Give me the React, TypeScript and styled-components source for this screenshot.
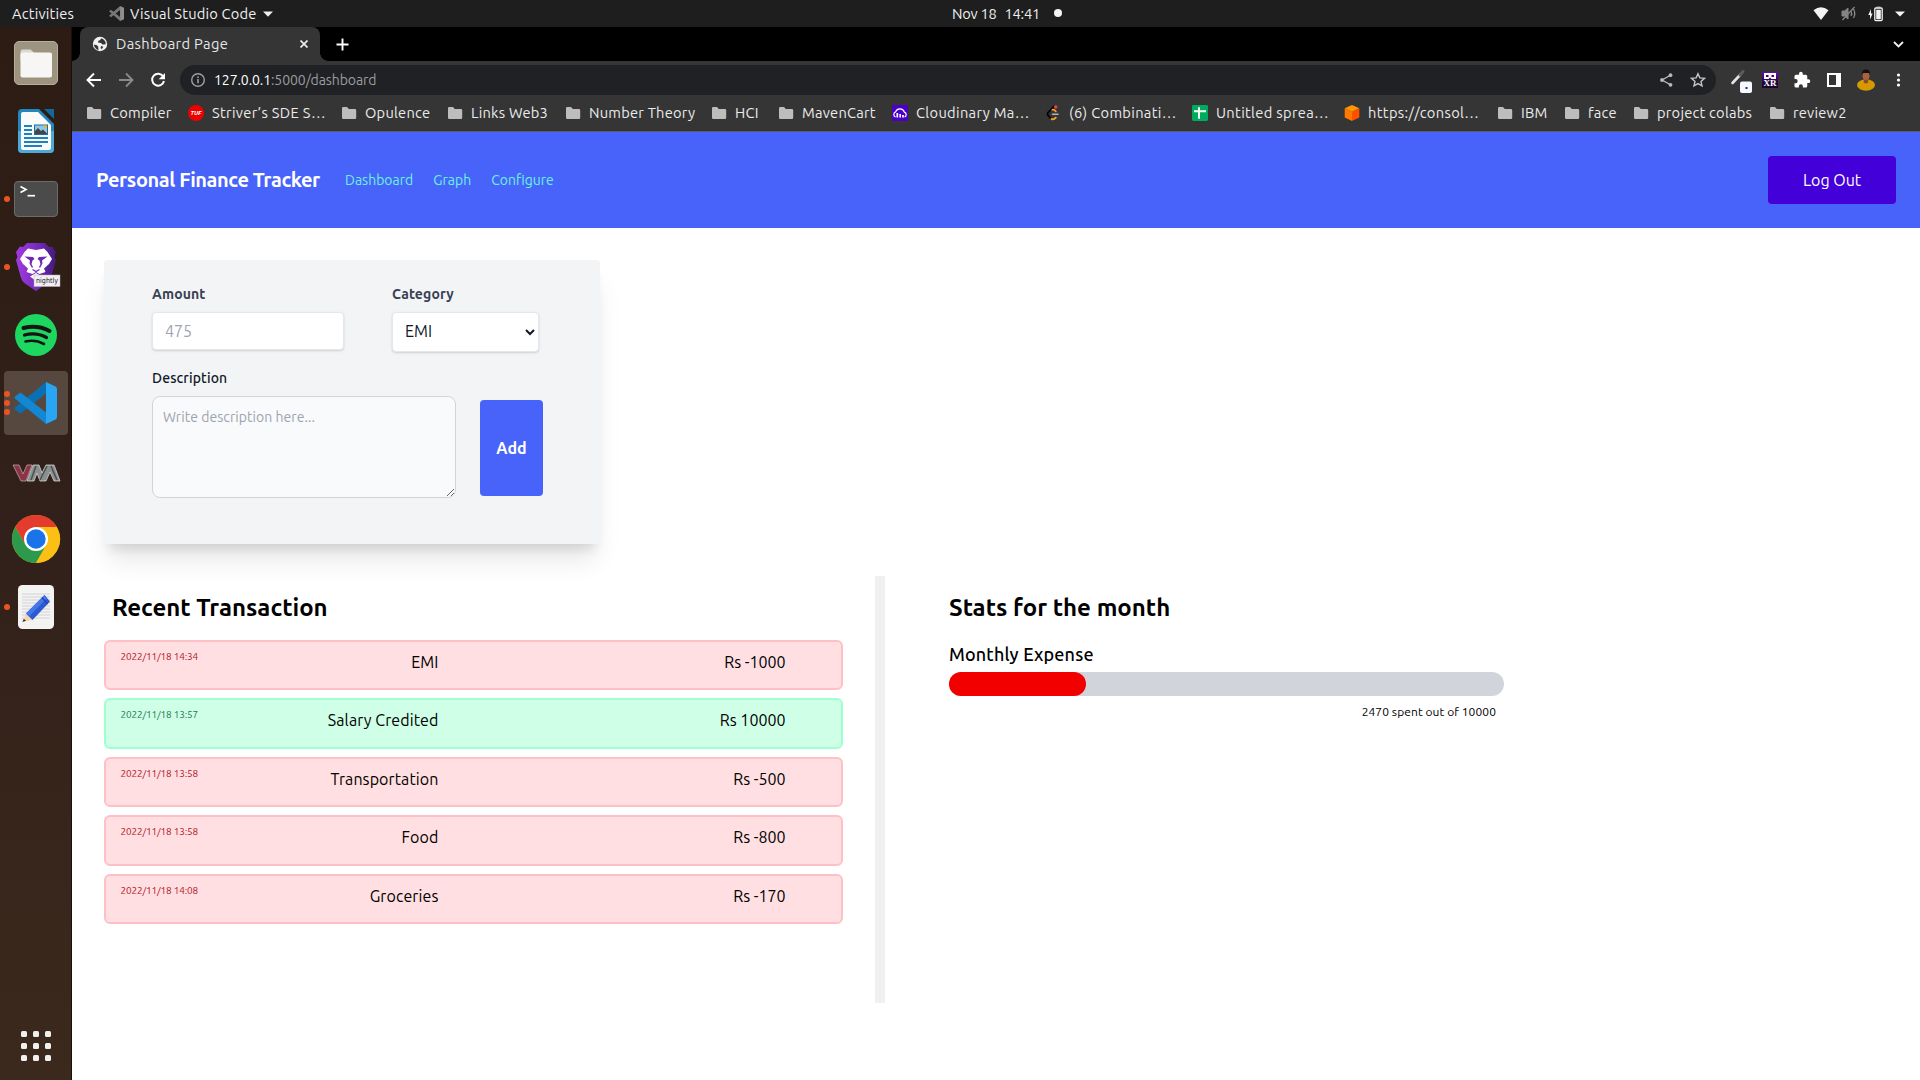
import React from "react";
import styled, { createGlobalStyle } from "styled-components";

const Global = createGlobalStyle`
  *, *::before, *::after { box-sizing: border-box; }
  html, body { margin: 0; padding: 0; background: #fff; }
  body {
    font-family: "Ubuntu", "Noto Sans", "Open Sans", sans-serif;
    font-size: 16px;
    overflow: hidden;
  }
  button, input, select, textarea { font-family: inherit; margin: 0; }
`;

/* ---------- shell ---------- */

const Screen = styled.div`
  width: 1920px;
  height: 1080px;
  display: flex;
  flex-direction: column;
  background: #fff;
  overflow: hidden;
`;

const TopBar = styled.header`
  height: 27px;
  flex: none;
  background: #1e1e1e;
  color: #f0f0f0;
  font-size: 14.67px;
  display: grid;
  grid-template-columns: 952px 1fr auto;
  align-items: center;
  padding-right: 15px;
  line-height: 27px;
`;

const TopLeft = styled.div`
  display: flex;
  align-items: center;
  padding-left: 12px;
  letter-spacing: 0.2px;
`;

const AppMenu = styled.div`
  display: flex;
  align-items: center;
  margin-left: 35px;
  gap: 6px;
`;

const Clock = styled.div`
  display: flex;
  align-items: center;
  gap: 8px;
  letter-spacing: -0.25px;
  line-height: 25px;
  padding-bottom: 1px;
`;

const Bullet = styled.i`
  width: 8px;
  height: 8px;
  border-radius: 50%;
  background: #f4f4f4;
  margin-left: 6px;
`;

const Tray = styled.div`
  display: flex;
  align-items: center;
  gap: 11.7px;
  svg { display: block; }
`;

const Body = styled.div`
  flex: 1;
  display: flex;
  min-height: 0;
`;

const Dock = styled.nav`
  width: 72px;
  flex: none;
  display: flex;
  flex-direction: column;
  padding: 2px 0 0;
  background: linear-gradient(#2c1c13, #32211a 50%, #3c291d);
  border-right: 1px solid #17100b;
`;

const Slot = styled.div<{ $active?: boolean }>`
  height: 68px;
  flex: none;
  display: grid;
  grid-template-columns: 4px 6px 52px 10px;
  align-items: center;
  background: ${(p) => (p.$active ? "#57483f" : "transparent")};
  ${(p) => p.$active && "height: 64px; margin: 2px 3px 2px 4px; border-radius: 4px; grid-template-columns: 0 6px 52px 6px;"}
`;

const Pips = styled.div`
  grid-column: 2;
  display: flex;
  flex-direction: column;
  gap: 3px;
`;

const Pip = styled.i`
  width: 6px;
  height: 6px;
  border-radius: 50%;
  background: #e95420;
`;

const IconCell = styled.div`
  grid-column: 3;
  display: flex;
  justify-content: center;
  svg { display: block; overflow: visible; }
`;

const AppsGrid = styled.div`
  margin: auto 0 19px 21px;
  display: grid;
  grid-template-columns: repeat(3, 6px);
  gap: 6px;
`;

const AppsDot = styled.i`
  height: 6px;
  border-radius: 1.5px;
  background: #f2f0ee;
`;

/* ---------- browser ---------- */

const Browser = styled.div`
  flex: 1;
  display: flex;
  flex-direction: column;
  min-width: 0;
`;

const TabStrip = styled.div`
  height: 34px;
  flex: none;
  background: #000;
  display: flex;
  align-items: center;
  padding: 0 16px 0 8px;
`;

const Tab = styled.div`
  position: relative;
  width: 240px;
  height: 34px;
  background: #353535;
  border-radius: 8px 8px 0 0;
  display: flex;
  align-items: center;
  padding: 0 12px 0 12px;
  color: #e6e6e6;
  font-size: 14.67px;
  letter-spacing: 0.33px;
  svg { display: block; flex: none; }
  &::before, &::after {
    content: "";
    position: absolute;
    bottom: 0;
    width: 8px;
    height: 8px;
  }
  &::before { left: -8px; background: radial-gradient(circle at 0 0, transparent 7.5px, #353535 8px); }
  &::after { right: -8px; background: radial-gradient(circle at 100% 0, transparent 7.5px, #353535 8px); }
`;

const TabTitle = styled.span`
  flex: 1;
  padding: 0 0 2px 8px;
`;

const NewTab = styled.div`
  margin-left: 16px;
  svg { display: block; }
`;

const TabMenu = styled.div`
  margin-left: auto;
  svg { display: block; }
`;

const Toolbar = styled.div`
  height: 38px;
  flex: none;
  background: #353535;
  display: flex;
  align-items: center;
  padding: 0 11px 0 12px;
  svg { display: block; flex: none; }
`;

const NavIcons = styled.div`
  display: flex;
  flex: none;
  gap: 12px;
  width: 96px;
`;

const Omnibox = styled.div`
  width: 1536px;
  flex: none;
  height: 30px;
  border-radius: 15px;
  background: #202124;
  display: flex;
  align-items: center;
  padding: 0 10px;
  font-size: 14px;
`;

const UrlText = styled.div`
  flex: 1;
  padding-left: 8px;
  color: #9a9da1;
  letter-spacing: -0.08px;
`;

const UrlHost = styled.span`
  color: #fff;
`;

const OmniActions = styled.div`
  display: flex;
  align-items: center;
  gap: 16px;
`;

const Extensions = styled.div`
  display: flex;
  align-items: center;
  flex: 1;
  margin-left: 14px;
`;

const ExtSlot = styled.div<{ $w: number }>`
  width: ${(p) => p.$w}px;
`;

const XrBadge = styled.div`
  width: 16px;
  height: 16px;
  background: linear-gradient(#6a0db5, #1b0630 70%);
  display: flex;
  flex-direction: column;
  align-items: center;
  color: #fff;
  font: bold 9px/8px "Liberation Serif", serif;
  svg { margin-top: 1px; }
`;

const Bookmarks = styled.div`
  height: 33px;
  flex: none;
  background: #353535;
  border-bottom: 1px solid #5b5c60;
  padding: 0 0 5px 14px;
  display: flex;
  align-items: center;
  color: #ebebeb;
  font-size: 14.67px;
`;

const Bookmark = styled.div<{ $w: number }>`
  width: ${(p) => p.$w}px;
  flex: none;
  display: flex;
  align-items: center;
  gap: 8px;
  white-space: nowrap;
  svg { display: block; flex: none; }
`;

const BookmarkLabel = styled.span<{ $cut: boolean }>`
  padding-bottom: 1px;
  letter-spacing: ${(p) => (p.$cut ? 0.33 : 0.23)}px;
`;

const TufMark = styled.span`
  width: 16px;
  height: 16px;
  border-radius: 50%;
  background: #ec0000;
  color: #fff;
  font-size: 6px;
  font-weight: 700;
  font-style: italic;
  line-height: 16px;
  text-align: center;
  flex: none;
`;

/* ---------- web page ---------- */

const Page = styled.main`
  flex: 1;
  background: #fff;
`;

const SiteHeader = styled.header`
  height: 96px;
  background: #4863fa;
  display: flex;
  align-items: center;
  padding: 0 24px 0 24px;
`;

const Brand = styled.h1`
  margin: 0 24px 0 0;
  width: 225px;
  white-space: nowrap;
  font-size: 20px;
  line-height: 28px;
  letter-spacing: -0.4px;
  font-weight: 700;
  color: #fff;
`;

const SiteLink = styled.a`
  margin-right: 20px;
  font-size: 14px;
  line-height: 20px;
  color: #68f3df;
`;

const LogOut = styled.button`
  margin-left: auto;
  width: 128px;
  height: 48px;
  padding: 0 0 1px;
  border: 0;
  border-radius: 4px;
  background: #4300d9;
  color: #fff;
  font-size: 16px;
`;

const Card = styled.form`
  margin: 32px 0 32px 32px;
  width: 496px;
  height: 284px;
  padding: 24px 48px 0;
  background: #f3f4f6;
  border-radius: 4px;
  box-shadow: 0 20px 25px -5px rgba(0, 0, 0, 0.1), 0 10px 10px -5px rgba(0, 0, 0, 0.1);
`;

const TopFields = styled.div`
  display: flex;
  gap: 48px;
  height: 84px;
`;

const Label = styled.label<{ $dark?: boolean }>`
  display: block;
  height: 20px;
  line-height: 20px;
  margin-bottom: 8px;
  font-size: 14px;
  letter-spacing: 0.12px;
  font-weight: ${(p) => (p.$dark ? 500 : 700)};
  color: ${(p) => (p.$dark ? "#111827" : "#374151")};
`;

const Amount = styled.input`
  display: block;
  width: 192px;
  height: 38px;
  padding: 0 12px 1px;
  border: 1px solid #e5e7eb;
  border-radius: 4px;
  background: #fff;
  font-size: 16px;
  box-shadow: 0 1px 3px rgba(0, 0, 0, 0.1), 0 1px 2px rgba(0, 0, 0, 0.06);
  &::placeholder { color: #9ca3af; }
`;

const Category = styled.select`
  display: block;
  width: 147px;
  height: 40px;
  padding: 0 0 3px 8px;
  border: 1px solid #e5e7eb;
  border-radius: 4px;
  background: #fff;
  color: #111827;
  font-size: 16px;
  box-shadow: 0 1px 3px rgba(0, 0, 0, 0.1), 0 1px 2px rgba(0, 0, 0, 0.06);
`;

const BottomFields = styled.div`
  display: flex;
  gap: 24px;
`;

const Notes = styled.textarea`
  display: block;
  width: 304px;
  height: 102px;
  padding: 10px;
  border: 1px solid #d1d5db;
  border-radius: 8px;
  background: #f9fafb;
  font-size: 14px;
  line-height: 20px;
  letter-spacing: 0.05px;
  &::placeholder { color: #9ca3af; }
`;

const Add = styled.button`
  margin-top: 32px;
  width: 63px;
  height: 96px;
  padding: 0;
  border: 0;
  border-radius: 4px;
  background: #4863fa;
  color: #fff;
  font-size: 16px;
  font-weight: 700;
`;

const Columns = styled.div`
  display: flex;
  height: 427px;
  padding-left: 32px;
`;

const Recent = styled.section`
  width: 781px;
  padding-right: 32px;
  border-right: 10px solid #f0f0f0;
`;

const Heading = styled.h2<{ $indent?: boolean }>`
  margin: 0;
  height: 64px;
  padding-left: ${(p) => (p.$indent ? 8 : 0)}px;
  line-height: 64px;
  font-size: 24px;
  font-weight: 700;
  color: #000;
`;

const Rows = styled.div`
  display: flex;
  flex-direction: column;
  gap: 8px;
`;

const Row = styled.div<{ $credit?: boolean }>`
  height: 50.4px;
  display: grid;
  grid-template-columns: 120px 198.5px 1fr;
  padding: 4px 55.5px 0 14px;
  border: 2px solid ${(p) => (p.$credit ? "#a0ffcf" : "#ffc0c5")};
  border-radius: 6px;
  background: ${(p) => (p.$credit ? "#d0ffe7" : "#ffdfe1")};
  color: #000;
  font-size: 16px;
  line-height: 32px;
`;

const Stamp = styled.time<{ $credit?: boolean }>`
  font-size: 10px;
  line-height: 21px;
  letter-spacing: -0.14px;
  padding-left: 0.5px;
  color: ${(p) => (p.$credit ? "#147a4c" : "#b3101f")};
`;

const Name = styled.div`
  text-align: right;
  letter-spacing: 0.1px;
`;

const Money = styled.div`
  text-align: right;
`;

const Stats = styled.section`
  padding-left: 64px;
`;

const StatTitle = styled.h3`
  margin: 0;
  height: 32px;
  line-height: 28px;
  font-size: 18px;
  letter-spacing: 0.17px;
  font-weight: 500;
  color: #000;
`;

const Track = styled.div`
  width: 555px;
  height: 24px;
  border-radius: 12px;
  background: #d1d5db;
`;

const Fill = styled.div`
  height: 24px;
  border-radius: 12px;
  background: #f20000;
`;

const Caption = styled.p`
  margin: 0;
  width: 547px;
  text-align: right;
  font-size: 12px;
  line-height: 31px;
  letter-spacing: 0.08px;
  color: #000;
`;

/* ---------- icons ---------- */

const FolderIcon = () => (
  <svg width="16" height="16" viewBox="0 0 16 16">
    <path d="M1 3.2Q1 2 2.2 2H6l1.8 2H14q1.2 0 1.2 1.2v7.6q0 1.2-1.2 1.2H2.2Q1 14 1 12.8z" fill="#bdbdbd" />
  </svg>
);

const CloudinaryIcon = () => (
  <svg width="16" height="16" viewBox="0 0 16 16">
    <rect width="16" height="16" fill="#4a00c8" />
    <path d="M3.6 12A2.7 2.7 0 0 1 3.600 6.900 4.600 4.600 0 0 1 12.300 7.100 2.600 2.600 0 0 1 12.600 12" fill="none" stroke="#fff" strokeWidth="1.200" />
    <path d="M5.300 8v4.500M8.200 9v3.500M11 10v2.500" stroke="#fff" strokeWidth="1.700" />
  </svg>
);

const LeetIcon = () => (
  <svg width="16" height="16" viewBox="0 0 16 16" fill="none" strokeLinecap="round">
    <path d="M9 1.500 3 7.500Q2 9 3 10.500L6 13.600" stroke="#050505" strokeWidth="1.800" />
    <path d="M7.300 4.800Q8.800 4.300 10.800 6.300" stroke="#f5a623" strokeWidth="1.700" />
    <path d="M6.500 14Q8.500 15.300 10.800 12.600" stroke="#f5a623" strokeWidth="1.800" />
    <path d="M7.500 9.300h5.500" stroke="#b3b3b3" strokeWidth="1.500" />
    <circle cx="10.700" cy="2" r="1.800" fill="#e8404a" />
  </svg>
);

const SheetIcon = () => (
  <svg width="16" height="16" viewBox="0 0 16 16">
    <rect width="16" height="16" rx="1.400" fill="#00ac5c" />
    <path d="M7 2.200v11.600M2 6.200h12" stroke="#fff" strokeWidth="1.900" />
  </svg>
);

const AwsIcon = () => (
  <svg width="16" height="16" viewBox="0 0 16 16">
    <path d="M8 0l7.300 3.200L8 7 .7 3.200z" fill="#ff9800" />
    <path d="M.7 3.200 8 7v9L.7 12.400z" fill="#ff7800" />
    <path d="M15.300 3.200 8 7v9l7.300-3.600z" fill="#ff5000" />
  </svg>
);

const FilesApp = () => (
  <svg width="44" height="44" viewBox="0 0 44 44">
    <rect x=".5" y=".5" width="43" height="43" rx="4.5" fill="#9c947f" stroke="#b5ae9b" />
    <path d="M6.500 10.500q0-2 2-2h8l4 3.500h15.500q2 0 2 2v6H6.500z" fill="#dcd8cf" />
    <rect x="6.500" y="11.500" width="31.500" height="25" rx="2" fill="#f8f6f4" />
  </svg>
);

const WriterApp = () => (
  <svg width="36" height="44" viewBox="0 0 36 44">
    <path d="M4 0h17l15 15v25q0 4-4 4H4q-4 0-4-4V4q0-4 4-4z" fill="#2287bd" />
    <path d="M0 22h36v18q0 4-4 4H4q-4 0-4-4z" fill="#4baad6" />
    <path d="M5 3h15l13 13v22.500q0 2.500-2.500 2.500h-25Q3 41 3 38.500V5q0-2 2-2z" fill="#fafafa" />
    <path d="M26 0h10v10z" fill="#11689c" />
    <path d="M6 17h8M6 21h8M6 25h8M6 29h24M6 33h24M6 37h18" stroke="#1c82bd" strokeWidth="2" />
    <rect x="16" y="15.500" width="14" height="10.500" fill="#1a6fa5" />
    <rect x="17" y="16.500" width="12" height="8.500" fill="#8fc7e8" />
    <path d="M17 25v-3l3-3 3 3 2-1.500 4 4V25z" fill="#444" />
    <path d="M25 16.500h4V20z" fill="#f5b800" />
  </svg>
);

const TerminalApp = () => (
  <svg width="44" height="36" viewBox="0 0 44 36">
    <rect x=".5" y=".5" width="43" height="35" rx="3.500" fill="#4b4b4b" stroke="#6b6b6b" />
    <path d="M6.500 5.500 12 8.500 6.500 11.500" fill="none" stroke="#fff" strokeWidth="1.700" />
    <path d="M13.500 14.700h7.500" stroke="#fff" strokeWidth="1.700" />
  </svg>
);

const BraveApp = () => (
  <svg width="40" height="48" viewBox="0 0 40 48">
    <defs>
      <linearGradient id="brave" x1="0" x2="1">
        <stop offset="0" stopColor="#a03be0" />
        <stop offset=".5" stopColor="#7a2cc0" />
        <stop offset="1" stopColor="#43197c" />
      </linearGradient>
    </defs>
    <path d="M11 0h18l4 4 3-.5L40 9l-1.500 5L40 17l-5 18q-1 3.500-4 5.500L20 48 9 40.500Q6 38.500 5 35L0 17l1.500-3L0 9l4-5.500 3 .5z" fill="url(#brave)" />
    <path d="M12 5.500 20 7l8-1.500 3.500 3.500 4.500 7-3 5-5 4.500 1.500 3.500-6 2L20 29l-3.500 2-6-2 1.500-3.500L7 21l-3-5 4.500-7z" fill="#fff" />
    <path d="M20 30l6 3.500L20 38l-6-4.500z" fill="#fff" />
    <path d="M8.500 13.500 17 14l1.500 2-2 1.500-1 3.500 1.500 3-1 1-2.500-4.500.5-3zM31.500 13.500 23 14l-1.500 2 2 1.500 1 3.500-1.500 3 1 1 2.500-4.500-.5-3z" fill="#6f28b5" />
    <path d="M16.500 26.500 20 28.500l3.500-2" fill="none" stroke="#6f28b5" strokeWidth="1.300" />
    <rect x="18" y="32" width="26" height="11.500" fill="#f2eef4" stroke="#b9b1bd" strokeWidth=".5" />
    <text x="31" y="40.300" fontSize="7.300" textAnchor="middle" fill="#222" fontFamily="DejaVu Sans, Noto Sans, sans-serif" textLength="22" lengthAdjust="spacingAndGlyphs">nightly</text>
  </svg>
);

const SpotifyApp = () => (
  <svg width="42" height="42" viewBox="0 0 42 42">
    <circle cx="21" cy="21" r="21" fill="#1ed760" />
    <g fill="none" stroke="#191414" strokeLinecap="round">
      <path d="M8.500 14q14-3.500 26 3" strokeWidth="3.900" />
      <path d="M9.500 21q12-3 22 2.500" strokeWidth="3.200" />
      <path d="M10.500 27.500q10-2.300 18.500 2.500" strokeWidth="2.600" />
    </g>
  </svg>
);

const CodeApp = () => (
  <svg width="42" height="42" viewBox="0 0 42 42">
    <path d="M31 0v11.500L5.500 31.500 0 27.500q-.8-1 0-2z" fill="#0a6fb3" />
    <path d="M31 42V30.500L5.500 10.500 0 14.500q-.8 1 0 2z" fill="#1287d2" />
    <path d="M31 0l9.500 4.500q1.500.8 1.500 2.500v28q0 1.700-1.500 2.500L31 42z" fill="#2aa5f3" />
  </svg>
);

const VmApp = () => (
  <svg width="47" height="26" viewBox="0 -4 47 26">
    <path d="M0 3h6l4 9L14 3h5l-6 16H8z" fill="#8d3348" stroke="#b5a5a5" strokeWidth=".8" />
    <path d="M14 19 20 3h6l3 8 4-8h8l6 16h-6l-4-9-4 9h-6l-3-8-3 8z" fill="#8c8f90" stroke="#cfcfcf" strokeWidth=".8" />
    <path d="M23 4l-5 14M34 4l-7 14M38 4l6 14" stroke="#4b4f50" strokeWidth="1.500" />
  </svg>
);

const ChromeApp = () => (
  <svg width="48" height="48" viewBox="0 0 48 48">
    <circle cx="24" cy="24" r="24" fill="#fbbc04" />
    <path d="M3.200 12A24 24 0 0 1 44.800 12H24L13.600 30z" fill="#e33b2e" />
    <path d="M3.200 12A24 24 0 0 0 24 48l10.400-18L24 24 13.600 30z" fill="#2d9a4b" />
    <path d="M44.800 12A24 24 0 0 1 24 48l10.400-18L24 12z" fill="#fcc015" />
    <circle cx="24" cy="24" r="12" fill="#fff" />
    <circle cx="24" cy="24" r="9.700" fill="#1a73e8" />
  </svg>
);

const NoteApp = () => (
  <svg width="36" height="44" viewBox="0 0 36 44">
    <rect width="36" height="44" rx="4.500" fill="#f3f3f2" />
    <path d="M4 9h28M4 12h28M4 15h28M4 18h28M4 21h28M4 24h28M4 27h28M4 30h28M4 33h28" stroke="#cfcfcf" strokeWidth=".9" />
    <path d="M4.500 37 8 28.500l6.500 6.500z" fill="#f3d6b5" />
    <path d="M4.500 37l1.300-3.300 2.200 2.100z" fill="#333" />
    <path d="M8 28.500 26.500 10l5.500 6.500L14.500 35z" fill="#2b5bd0" />
    <path d="M8 28.500 26.500 10l2.700 3L11 31.500z" fill="#4676ea" />
    <path d="M24 12.500l5.500 6.500" stroke="#1e46ae" strokeWidth="1.200" />
  </svg>
);

const DOCK: { icon: React.ReactNode; pips: number; active?: boolean }[] = [
  { icon: <FilesApp />, pips: 0 },
  { icon: <WriterApp />, pips: 0 },
  { icon: <TerminalApp />, pips: 1 },
  { icon: <BraveApp />, pips: 1 },
  { icon: <SpotifyApp />, pips: 0 },
  { icon: <CodeApp />, pips: 3, active: true },
  { icon: <VmApp />, pips: 0 },
  { icon: <ChromeApp />, pips: 0 },
  { icon: <NoteApp />, pips: 1 },
];

const BOOKMARKS: { icon: React.ReactNode; label: string; w: number }[] = [
  { icon: <FolderIcon />, label: "Compiler", w: 102 },
  { icon: <TufMark>TUF</TufMark>, label: "Striver’s SDE S…", w: 153 },
  { icon: <FolderIcon />, label: "Opulence", w: 106 },
  { icon: <FolderIcon />, label: "Links Web3", w: 118 },
  { icon: <FolderIcon />, label: "Number Theory", w: 146 },
  { icon: <FolderIcon />, label: "HCI", w: 67 },
  { icon: <FolderIcon />, label: "MavenCart", w: 114 },
  { icon: <CloudinaryIcon />, label: "Cloudinary Ma…", w: 153 },
  { icon: <LeetIcon />, label: "(6) Combinati…", w: 147 },
  { icon: <SheetIcon />, label: "Untitled sprea…", w: 152 },
  { icon: <AwsIcon />, label: "https://consol…", w: 153 },
  { icon: <FolderIcon />, label: "IBM", w: 67 },
  { icon: <FolderIcon />, label: "face", w: 69 },
  { icon: <FolderIcon />, label: "project colabs", w: 136 },
  { icon: <FolderIcon />, label: "review2", w: 90 },
];

const TRANSACTIONS = [
  { at: "2022/11/18 14:34", name: "EMI", amount: -1000 },
  { at: "2022/11/18 13:57", name: "Salary Credited", amount: 10000 },
  { at: "2022/11/18 13:58", name: "Transportation", amount: -500 },
  { at: "2022/11/18 13:58", name: "Food", amount: -800 },
  { at: "2022/11/18 14:08", name: "Groceries", amount: -170 },
];

function SystemBar() {
  return (
    <TopBar>
      <TopLeft>
        <span>Activities</span>
        <AppMenu>
          <svg width="15" height="15" viewBox="0 0 42 42" fill="#8e8e8e">
            <path d="M31 0v11.500L5.500 31.500 0 27.500z" fill="#777" />
            <path d="M31 42V30.500L5.500 10.500 0 14.500z" fill="#777" />
            <path d="M31 0l11 5v32l-11 5z" />
          </svg>
          <span>Visual Studio Code</span>
          <svg width="10" height="6" viewBox="0 0 10 6"><path d="M0 .5h10L5 5.700z" fill="#f0f0f0" /></svg>
        </AppMenu>
      </TopLeft>
      <Clock>
        <span>Nov 18</span>
        <span>14:41</span>
        <Bullet />
      </Clock>
      <Tray>
        <svg width="16" height="14" viewBox="0 0 16 14"><path d="M.5 3.200Q8-2.600 15.500 3.200L8 13z" fill="#f4f4f4" /></svg>
        <svg width="16" height="15" viewBox="0 0 16 15" fill="none" stroke="#858585">
          <path d="M1 5h2.500L7 2v11L3.500 10H1z" fill="#858585" />
          <path d="M10 5q1.500 2.500 0 5M12.500 3q2.500 4.500 0 9" strokeWidth="1.300" />
          <path d="M1.500 14 13.500 1" strokeWidth="1.300" />
        </svg>
        <svg width="15" height="16" viewBox="0 0 15 16">
          <path d="M3 3 .3 9H2v4.500L4.600 7.500H3z" fill="#f4f4f4" />
          <rect x="6.800" y="2" width="7.400" height="12.600" rx="1" fill="none" stroke="#f4f4f4" strokeWidth="1.300" />
          <path d="M8.500 1h4M8.500 4h4v9h-4z" fill="#f4f4f4" stroke="#f4f4f4" strokeWidth=".6" />
        </svg>
        <svg width="10" height="6" viewBox="0 0 10 6"><path d="M0 .5h10L5 5.500z" fill="#f4f4f4" /></svg>
      </Tray>
    </TopBar>
  );
}

function BrowserChrome() {
  return (
    <>
      <TabStrip>
        <Tab>
          <svg width="16" height="16" viewBox="0 0 16 16">
            <circle cx="8" cy="8" r="7.200" fill="#f2f2f2" />
            <path d="M1.700 8.500 5 9.200l1.200 1.600.3 3.400Q3 13 1.700 8.500zM9.200 2.200 8 4.300 6.300 4.700 6 6.500l3 .5 1.500 1.500 3.300-.3Q14 4 9.200 2.200zM9 10l2.300.8-1.500 2.500L8.700 12z" fill="#353535" />
          </svg>
          <TabTitle>Dashboard Page</TabTitle>
          <svg width="8" height="8" viewBox="0 0 8 8"><path d="M.5.5l7 7M7.500.5l-7 7" stroke="#ececec" strokeWidth="1.700" /></svg>
        </Tab>
        <NewTab>
          <svg width="13" height="13" viewBox="0 0 13 13"><path d="M6.500.5v12M.5 6.500h12" stroke="#fff" strokeWidth="1.900" /></svg>
        </NewTab>
        <TabMenu>
          <svg width="11" height="7" viewBox="0 0 11 7"><path d="M1 1l4.500 4.500L10 1" fill="none" stroke="#f0f0f0" strokeWidth="1.800" /></svg>
        </TabMenu>
      </TabStrip>
      <Toolbar>
        <NavIcons>
          <svg width="20" height="20" viewBox="0 0 20 20" fill="none" stroke="#fff" strokeWidth="1.900"><path d="M17 10H4.500M10 3.500 3.500 10l6.500 6.500" /></svg>
          <svg width="20" height="20" viewBox="0 0 20 20" fill="none" stroke="#8a8a8a" strokeWidth="1.900"><path d="M3 10h12.500M10 3.500l6.500 6.500-6.500 6.500" /></svg>
          <svg width="20" height="20" viewBox="0 0 20 20" fill="none">
            <path d="M15.200 6.400A6 6 0 1 0 16 11" stroke="#fff" strokeWidth="2" />
            <path d="M17 3v6.300h-6.300z" fill="#fff" />
          </svg>
        </NavIcons>
        <Omnibox>
          <svg width="16" height="16" viewBox="0 0 16 16" fill="none" stroke="#9aa0a6">
            <circle cx="8" cy="8" r="6.300" strokeWidth="1.400" />
            <path d="M8 7v4.300M8 4.400v1.500" strokeWidth="1.600" />
          </svg>
          <UrlText>
            <UrlHost>127.0.0.1</UrlHost>:5000/dashboard
          </UrlText>
          <OmniActions>
            <svg width="16" height="16" viewBox="0 0 16 16">
              <path d="M13 3 4 8l9 5" fill="none" stroke="#b9b9b9" strokeWidth="1.400" />
              <circle cx="12.500" cy="3.200" r="1.900" fill="#b9b9b9" />
              <circle cx="4" cy="8" r="1.900" fill="#b9b9b9" />
              <circle cx="12.500" cy="12.800" r="1.900" fill="#b9b9b9" />
            </svg>
            <svg width="16" height="16" viewBox="0 0 24 24" fill="none" stroke="#c4c4c4" strokeWidth="2.100">
              <path d="M12 2.500l2.800 6.300 6.900.7-5.200 4.600 1.500 6.800L12 17.400l-6 3.500 1.500-6.800L2.300 9.500l6.900-.7z" />
            </svg>
          </OmniActions>
        </Omnibox>
        <Extensions>
          <ExtSlot $w={32}>
            <svg width="22" height="26" viewBox="0 -2 22 26">
              <path d="M2.500 14 10 6" stroke="#e4e4e4" strokeWidth="2.600" strokeLinecap="round" />
              <path d="M10 6 13 2.500" stroke="#5c5c5c" strokeWidth="3" strokeLinecap="round" />
              <rect x="10" y="12.500" width="12" height="11.500" rx="2" fill="#f7f9ff" />
              <rect x="15.500" y="18" width="2" height="2" fill="#24315f" />
            </svg>
          </ExtSlot>
          <ExtSlot $w={31}>
            <XrBadge>
              <svg width="12" height="6" viewBox="0 0 12 6">
                <path d="M0 0h12v6H7.500L6 4.500 4.500 6H0z" fill="#fff" />
                <path d="M2 2h2.500v2H2zM7.500 2H10v2H7.500z" fill="#3c0a68" />
              </svg>
              XR
            </XrBadge>
          </ExtSlot>
          <ExtSlot $w={34}>
            <svg width="18" height="18" viewBox="0 0 24 24" fill="#fff">
              <path d="M20.500 11H19V7a2 2 0 0 0-2-2h-4V3.500a2.500 2.500 0 0 0-5 0V5H4a2 2 0 0 0-2 2v3.800h1.500a2.700 2.700 0 0 1 0 5.400H2V20a2 2 0 0 0 2 2h3.800v-1.500a2.700 2.700 0 0 1 5.400 0V22H17a2 2 0 0 0 2-2v-4h1.500a2.500 2.500 0 0 0 0-5z" />
            </svg>
          </ExtSlot>
          <ExtSlot $w={30}>
            <svg width="14" height="14" viewBox="0 0 14 14"><path fillRule="evenodd" d="M0 0h14v14H0zM2 2v10h7V2z" fill="#fff" /></svg>
          </ExtSlot>
          <ExtSlot $w={32}>
            <svg width="18" height="22" viewBox="0 0 18 22">
              <ellipse cx="9" cy="16" rx="9" ry="5.800" fill="#d59a00" />
              <path d="M6.800 9h4.400v4.500q-2.200 2-4.400 0z" fill="#8a4b2e" />
              <ellipse cx="9" cy="6.500" rx="3.500" ry="4.500" fill="#a9603e" />
              <path d="M5 6Q4.500.5 9 .5T13 6l-1-2H6z" fill="#111" />
            </svg>
          </ExtSlot>
          <svg width="20" height="16" viewBox="0 0 20 16" fill="#fff">
            <circle cx="9.500" cy="3" r="1.600" /><circle cx="9.500" cy="8" r="1.600" /><circle cx="9.500" cy="13" r="1.600" />
          </svg>
        </Extensions>
      </Toolbar>
      <Bookmarks>
        {BOOKMARKS.map((b) => (
          <Bookmark key={b.label} $w={b.w}>
            {b.icon}
            <BookmarkLabel $cut={b.label.endsWith("…")}>{b.label}</BookmarkLabel>
          </Bookmark>
        ))}
      </Bookmarks>
    </>
  );
}

function Tracker() {
  const spent = 2470;
  const budget = 10000;
  return (
    <Page>
      <SiteHeader>
        <Brand>Personal Finance Tracker</Brand>
        <SiteLink>Dashboard</SiteLink>
        <SiteLink>Graph</SiteLink>
        <SiteLink>Configure</SiteLink>
        <LogOut type="button">Log Out</LogOut>
      </SiteHeader>
      <Card>
        <TopFields>
          <div>
            <Label>Amount</Label>
            <Amount placeholder="475" />
          </div>
          <div>
            <Label>Category</Label>
            <Category defaultValue="EMI">
              <option>EMI</option>
            </Category>
          </div>
        </TopFields>
        <BottomFields>
          <div>
            <Label $dark>Description</Label>
            <Notes placeholder="Write description here..." />
          </div>
          <Add type="button">Add</Add>
        </BottomFields>
      </Card>
      <Columns>
        <Recent>
          <Heading $indent>Recent Transaction</Heading>
          <Rows>
            {TRANSACTIONS.map((t) => {
              const credit = t.amount > 0;
              return (
                <Row key={t.at + t.name} $credit={credit}>
                  <Stamp $credit={credit}>{t.at}</Stamp>
                  <Name>{t.name}</Name>
                  <Money>{`Rs ${t.amount}`}</Money>
                </Row>
              );
            })}
          </Rows>
        </Recent>
        <Stats>
          <Heading>Stats for the month</Heading>
          <StatTitle>Monthly Expense</StatTitle>
          <Track>
            <Fill style={{ width: `${(spent / budget) * 100}%` }} />
          </Track>
          <Caption>{`${spent} spent out of ${budget}`}</Caption>
        </Stats>
      </Columns>
    </Page>
  );
}

export default function App() {
  return (
    <Screen>
      <Global />
      <SystemBar />
      <Body>
        <Dock>
          {DOCK.map((d, i) => (
            <Slot key={i} $active={d.active}>
              <Pips>
                {Array.from({ length: d.pips }, (_, n) => <Pip key={n} />)}
              </Pips>
              <IconCell>{d.icon}</IconCell>
            </Slot>
          ))}
          <AppsGrid>
            {Array.from({ length: 9 }, (_, n) => <AppsDot key={n} />)}
          </AppsGrid>
        </Dock>
        <Browser>
          <BrowserChrome />
          <Tracker />
        </Browser>
      </Body>
    </Screen>
  );
}
